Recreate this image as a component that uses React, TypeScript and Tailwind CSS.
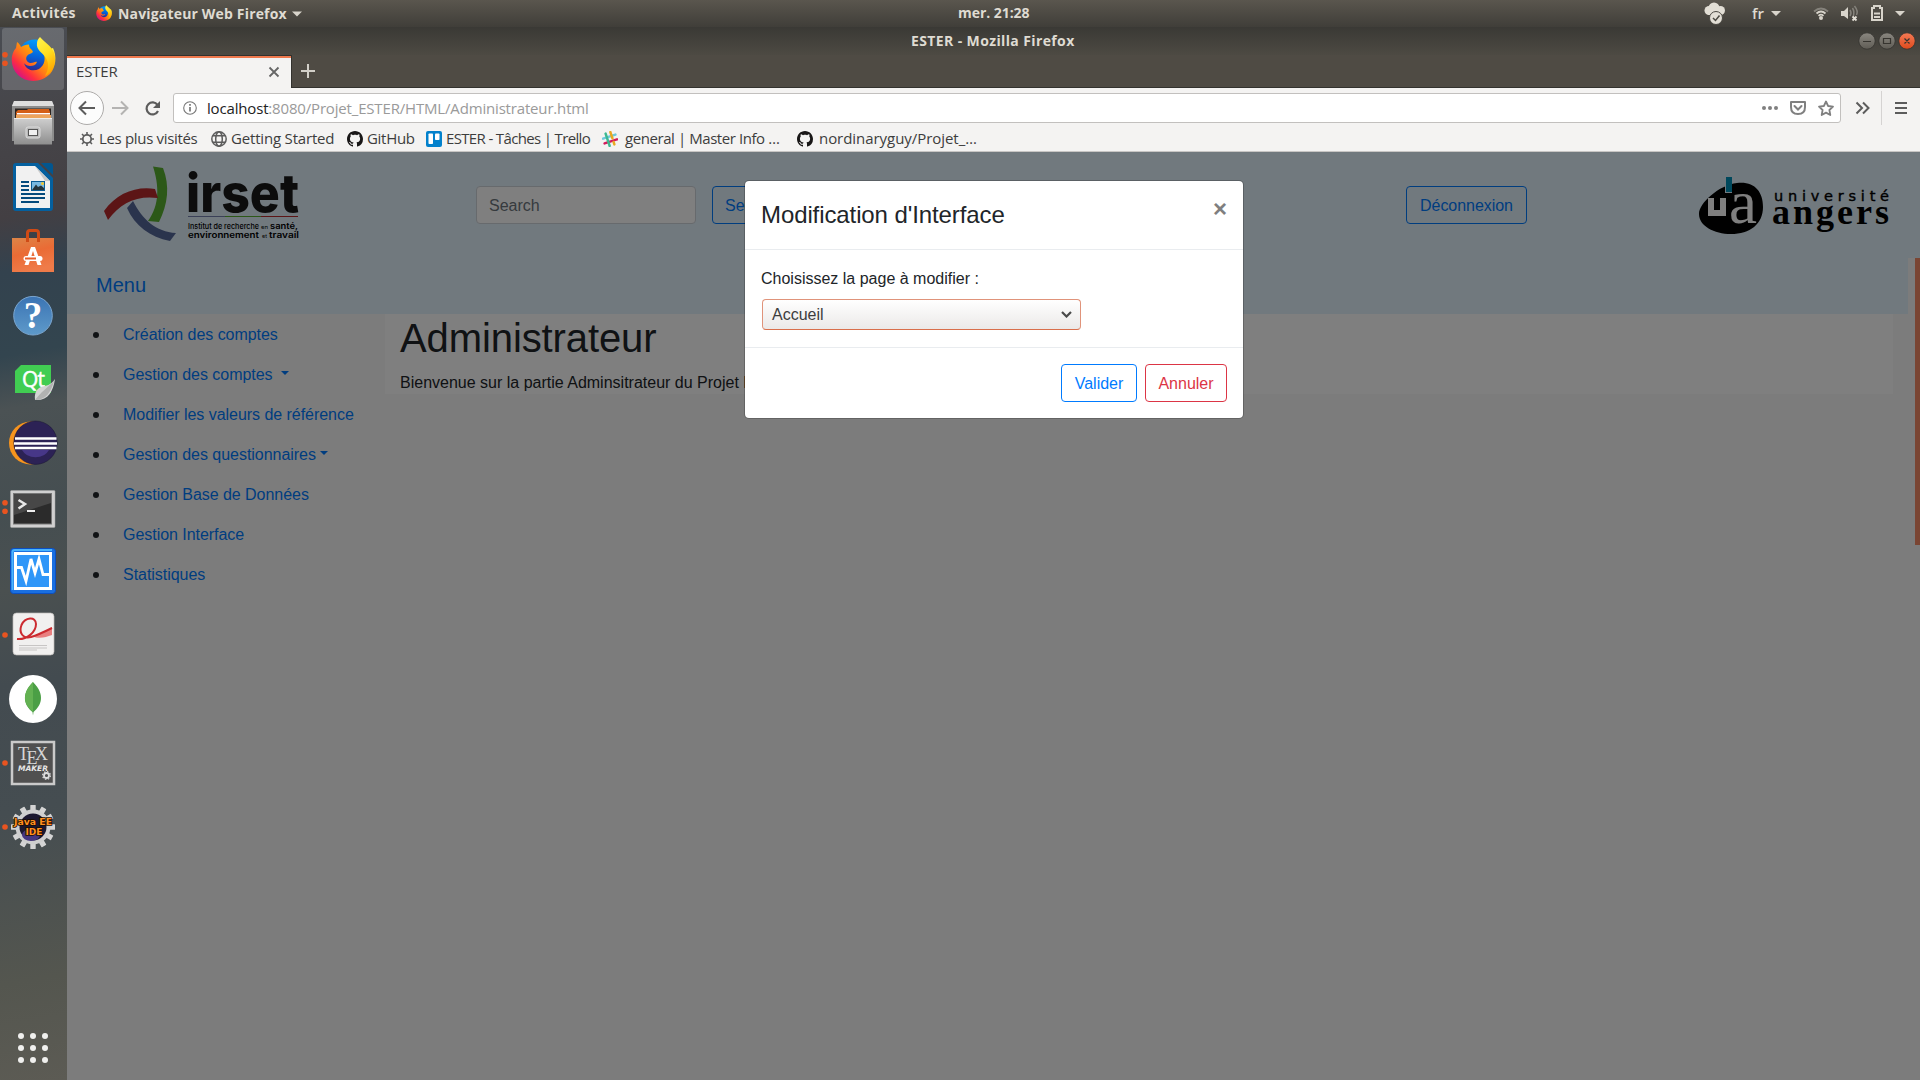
import type { ReactNode } from "react";

const ui = "font-['Open_Sans','Noto_Sans',sans-serif]";

function FirefoxArt() {
  return (
    <>
      <defs>
        <linearGradient id="fxBody" x1="0.9" y1="0.1" x2="0.1" y2="0.85">
          <stop offset="0" stopColor="#fff44f" />
          <stop offset="0.3" stopColor="#ffb000" />
          <stop offset="0.55" stopColor="#ff7a18" />
          <stop offset="0.78" stopColor="#ff2f3f" />
          <stop offset="1" stopColor="#d1108a" />
        </linearGradient>
        <linearGradient id="fxGlobe" x1="0.6" y1="0" x2="0.4" y2="1">
          <stop offset="0" stopColor="#00a0ff" />
          <stop offset="0.5" stopColor="#0562d8" />
          <stop offset="1" stopColor="#38197e" />
        </linearGradient>
        <linearGradient id="fxTail" x1="0.2" y1="0" x2="0.6" y2="1">
          <stop offset="0" stopColor="#fff24a" />
          <stop offset="0.5" stopColor="#ffde1f" />
          <stop offset="1" stopColor="#ffa300" />
        </linearGradient>
      </defs>
      <circle cx="24" cy="21" r="17.5" fill="url(#fxGlobe)" />
      <path
        d="M6 6 C8 7 9 9 10 11 C12 9.500 15 8.500 18 8.500 C18 11 19 12.500 21 14 L22 16 C20 18 17 18 16 20 C14 23 16 26 19 27 C22 27.500 24 25 26 26 C25 29 22 30 19 30 C15 30 13 27 13 27 C15 34 22 36 28 33 C34 29 35 22 32 16 L42 12 C46 20 45 31 39 38 C30 47 15 47 7 39 C-1 31 -1 18 5 12 Z"
        fill="url(#fxBody)"
      />
      <path
        d="M29 1 C33 6 40 9 43 17 C46 27 41 37 34 40 C38 33 38 27 35 22 C31 16 25 14 26 7 C26 4 28 2 29 1 Z"
        fill="url(#fxTail)"
      />
    </>
  );
}

function Slot({ children, dots = 0, active = false }: { children: ReactNode; dots?: number; active?: boolean }) {
  return (
    <svg width="67" height="64" viewBox="0 0 67 64" className="block shrink-0">
      {active && <rect x="2" y="1" width="62" height="62" rx="3" fill="#ffffff" fillOpacity="0.17" />}
      {dots === 1 && <circle cx="5" cy="32" r="2.800" fill="#e95420" />}
      {dots === 2 && (
        <>
          <circle cx="5" cy="27.700" r="2.800" fill="#e95420" />
          <circle cx="5" cy="36.200" r="2.800" fill="#e95420" />
        </>
      )}
      {children}
    </svg>
  );
}

function Dock() {
  const teeth = Array.from({ length: 12 }, (_, i) => i * 30);
  return (
    <aside className="flex w-[67px] shrink-0 flex-col bg-[linear-gradient(170deg,#4a4d53_0%,#464549_9%,#433f43_18%,#33424e_23%,#33454f_31%,#4b5254_36%,#454e51_46%,#4a5050_53%,#434b50_62%,#454d51_74%,#54564f_90%,#5c5b54_100%)]">
      <Slot dots={2} active>
        <g transform="translate(11 9)">
          <FirefoxArt />
        </g>
      </Slot>
      <Slot>
        <defs>
          <linearGradient id="steel" x1="0" y1="0" x2="0" y2="1">
            <stop offset="0" stopColor="#cfcfcf" />
            <stop offset="1" stopColor="#8e8e8e" />
          </linearGradient>
        </defs>
        <path d="M14 10H52L54 15V50H12V15Z" fill="#8d8d8d" />
        <path d="M14 10H52L54 15H12Z" fill="#dedede" />
        <rect x="15" y="17.500" width="36" height="12" fill="#2b2421" />
        <path d="M16 21L18 19H27L28 18H49L50 21V28H16Z" fill="#d45f18" />
        <rect x="17" y="22" width="33" height="1.500" fill="#fff" />
        <rect x="16" y="24" width="35" height="4" fill="#eda45c" />
        <rect x="14" y="27" width="38" height="26.500" rx="0.500" fill="url(#steel)" />
        <path d="M14 27.500H52" stroke="#eee" />
        <rect x="26" y="36" width="14" height="11" rx="2" fill="#b9b9b9" stroke="#dcdcdc" />
        <rect x="28.500" y="38.500" width="9" height="6" fill="#efefef" stroke="#555" />
      </Slot>
      <Slot>
        <path d="M16 8H38L53 23V53Q53 56 50 56H16Q13 56 13 53V11Q13 8 16 8Z" fill="#04609f" />
        <path d="M41 8H50Q53 8 53 11V20Z" fill="#02568f" />
        <path d="M16 11H35L50 26V53H16Z" fill="#f1f1f1" />
        <path d="M35 11L50 26H45Z" fill="#c9c9c9" />
        <path d="M21 27H29M21 31H29M21 35H29M21 39H45M21 43H45M21 47H39" stroke="#044a7c" strokeWidth="1.800" />
        <rect x="31" y="26" width="14" height="10" fill="#0b5c94" />
        <rect x="32" y="27" width="12" height="8" fill="#7ab9e0" />
        <path d="M32 35L36 29.500L38 32L41 30.500L44 33V35Z" fill="#26343a" />
        <circle cx="42.500" cy="28.500" r="1.500" fill="#f2c730" />
      </Slot>
      <Slot>
        <defs>
          <linearGradient id="bag" x1="0" y1="0" x2="0.3" y2="1">
            <stop offset="0" stopColor="#dd8547" />
            <stop offset="0.5" stopColor="#ea6b35" />
            <stop offset="1" stopColor="#ef7b49" />
          </linearGradient>
        </defs>
        <rect x="12" y="19" width="42" height="34" fill="url(#bag)" />
        <path d="M27.500 23V14Q27.500 11.500 30 11.500H36Q38.500 11.500 38.500 14V23" fill="none" stroke="#cf4a15" strokeWidth="3" />
        <path d="M24.500 46L31 28H35L41.500 46H37.500L33 32L28.500 46Z" fill="#fff" />
        <rect x="23.500" y="37" width="19" height="5" rx="2.500" fill="#fff" />
        <rect x="25" y="38.500" width="11" height="2" fill="#e8602c" />
      </Slot>
      <Slot>
        <defs>
          <linearGradient id="help" x1="0" y1="0" x2="0" y2="1">
            <stop offset="0" stopColor="#3b74b4" />
            <stop offset="1" stopColor="#5e9aca" />
          </linearGradient>
        </defs>
        <circle cx="33" cy="32.700" r="19.300" fill="url(#help)" stroke="#7ba6cf" strokeWidth="1" />
        <text x="33" y="45" textAnchor="middle" fontSize="37" fontFamily="Liberation Serif" fontWeight="bold" fill="#fff">
          ?
        </text>
      </Slot>
      <Slot>
        <path d="M21 18H51V46H15V24Z" fill="#41cd52" />
        <text x="22" y="40" fontSize="21" textLength="23" fontFamily="Open Sans" fill="#fff" stroke="#fff" strokeWidth="0.500">
          Qt
        </text>
        <path d="M55 32C53 45 48 54 35 53C34 44 38 40 45 39C50 38 53 35 55 32Z" fill="#d4d4d4" />
        <path d="M35 53C41 45 47 41 54 34C51 45 46 53 35 53Z" fill="#b2b2b2" />
      </Slot>
      <Slot>
        <circle cx="30.500" cy="32" r="21.500" fill="#f7941e" />
        <circle cx="35.500" cy="31.700" r="21.700" fill="#2c2255" stroke="#191432" strokeWidth="0.500" />
        <path d="M22 39H49A15 13 0 0 1 22 39Z" fill="#473788" />
        <path d="M15 27.500H56.500M14 32.500H57M15 37H56.500" stroke="#fff" strokeWidth="2.300" />
      </Slot>
      <Slot dots={2}>
        <rect x="10.500" y="15.500" width="44.500" height="37" rx="1" fill="#d0d0d0" stroke="#a5a5a5" strokeWidth="0.500" />
        <rect x="13.500" y="18.500" width="38" height="30.500" fill="#2b2b2b" stroke="#777" />
        <path d="M14 19H51V28L14 40Z" fill="#474747" />
        <path d="M18.500 25L25 29L18.500 33.500" fill="none" stroke="#e8e8e8" strokeWidth="2.500" />
        <path d="M27 36H35" stroke="#eee" strokeWidth="2" />
      </Slot>
      <Slot>
        <rect x="10.500" y="9.500" width="45" height="45" rx="3" fill="#1a6fe0" stroke="#0d4fc0" />
        <path d="M12.500 51V13Q12.500 11 15 11H52" fill="none" stroke="#49b4ff" strokeWidth="2" />
        <rect x="15.500" y="14.500" width="35" height="35" fill="#2f96f8" stroke="#fff" strokeWidth="3" />
        <path d="M16 28.500H21.500L26 42L31 20L35 34L39 20L43 35.500H50" fill="none" stroke="#fff" strokeWidth="2.800" />
      </Slot>
      <Slot dots={1}>
        <rect x="13" y="10" width="41" height="42" rx="3.500" fill="#f1f0ef" stroke="#bdbab8" strokeWidth="0.700" />
        <path d="M34 34C41 29 47 28 52 24V32C46 34 41 36 34 34Z" fill="#e98080" />
        <path d="M17 36C27 37 36 29 36 21C36 13 25 14 21.500 22C18.500 30 23 36 31 34C38 32 44 29 52 25" fill="none" stroke="#cc2b30" strokeWidth="2" />
        <path d="M19 42.500H47M19 45H47M19 47H37" stroke="#c7c5c4" strokeWidth="1" />
      </Slot>
      <Slot>
        <circle cx="33" cy="32" r="24" fill="#fff" />
        <path d="M33 15C46 28 41 39 33.500 45L33 48.500L32.500 45C25 39 20 28 33 15Z" fill="#4b9f45" />
        <path d="M33 15V45C25 39 20 28 33 15Z" fill="#63b152" />
      </Slot>
      <Slot dots={1}>
        <rect x="12" y="11" width="42" height="42" fill="#505050" stroke="#cacaca" strokeWidth="2.500" />
        <g fill="#d6d6d6" fontFamily="Liberation Serif" fontSize="18">
          <text x="18" y="29" textLength="10">T</text>
          <text x="26.500" y="33" textLength="10">E</text>
          <text x="35" y="29" textLength="12">X</text>
        </g>
        <text x="18" y="40" fontFamily="DejaVu Sans" fontWeight="bold" fontStyle="italic" fontSize="7.500" textLength="30" lengthAdjust="spacingAndGlyphs" fill="#e5e5e5">
          MAKER
        </text>
        <circle cx="46.500" cy="44.500" r="2.500" fill="none" stroke="#ddd" strokeWidth="1.800" />
        <circle cx="46.500" cy="44.500" r="3.900" fill="none" stroke="#ddd" strokeWidth="1.200" strokeDasharray="1.500 1.560" />
      </Slot>
      <Slot dots={1}>
        <g fill="#d4d4d4">
          {teeth.map((a) => (
            <rect key={a} x="30.300" y="10" width="5.400" height="8" rx="0.500" transform={`rotate(${a} 33 32)`} />
          ))}
        </g>
        <circle cx="33" cy="32" r="15.500" fill="#1c1830" stroke="#cfcfcf" strokeWidth="4" />
        <ellipse cx="31" cy="40" rx="9" ry="6" fill="#453680" />
        <g fontFamily="DejaVu Sans" fontSize="9" fontWeight="bold" fill="#ff8f1f" stroke="#1a0d00" strokeWidth="1.600" paintOrder="stroke">
          <text x="14" y="30" textLength="38" lengthAdjust="spacingAndGlyphs">Java EE</text>
          <text x="25.500" y="40" textLength="17" lengthAdjust="spacingAndGlyphs">IDE</text>
        </g>
      </Slot>
      <div className="mt-auto mb-[17px] ml-[18px] grid w-[30px] grid-cols-3 gap-[6px]">
        {Array.from({ length: 9 }, (_, i) => (
          <span key={i} className="size-[6px] rounded-full bg-[#f0f0ee]" />
        ))}
      </div>
    </aside>
  );
}

function TopBar() {
  return (
    <header className={`${ui} relative flex h-[27px] items-center bg-linear-to-b from-[#5a564e] to-[#403e39] text-[14px] font-bold text-[#dfdbd2]`}>
      <span className="mb-[2px] ml-3 w-[84px] tracking-[0.35px]">Activités</span>
      <svg width="16" height="16" viewBox="0 0 45 45" className="mb-px">
        <FirefoxArt />
      </svg>
      <span className="mb-px ml-[6px] w-[174px] whitespace-nowrap tracking-[0.17px]">Navigateur Web Firefox</span>
      <svg width="10" height="6" viewBox="0 0 10 6">
        <path d="M0 0.500H10L5 5.500Z" fill="#d8d4cb" />
      </svg>
      <span className="absolute top-[2px] left-[958px] whitespace-nowrap tracking-[-0.05px]">mer. 21:28</span>
      <svg className="ml-auto" width="216" height="27" viewBox="1704 0 216 27">
        <g fill="#e2ded5">
          <circle cx="1714" cy="8" r="5.500" />
          <circle cx="1709" cy="10.500" r="4.500" />
          <circle cx="1720.500" cy="10.500" r="4.500" />
          <rect x="1708" y="9" width="13" height="6" />
          <circle cx="1716" cy="18" r="6.500" stroke="#4a4842" strokeWidth="1" />
        </g>
        <path d="M1713 18L1715.500 20.500L1719.500 15.500" fill="none" stroke="#4a4842" strokeWidth="1.500" />
        <text x="1752" y="19" fontSize="15" fontFamily="Open Sans" fontWeight="600" fill="#dfdbd2" textLength="12">
          fr
        </text>
        <path d="M1771 11H1781L1776 16Z M1895 11H1905L1900 16Z" fill="#d8d4cb" />
        <g fill="none" stroke="#d8d4cb" strokeWidth="1.800">
          <path d="M1814 11.500Q1821 5.500 1828 11.500" stroke="#85827b" />
          <path d="M1816.500 13.500Q1821 9.500 1825.500 13.500" />
          <path d="M1818.500 15.800Q1821 13.500 1823.500 15.800" />
        </g>
        <circle cx="1821" cy="18" r="2" fill="#d8d4cb" />
        <path d="M1841 11H1844L1848 7V19L1844 16H1841Z" fill="#d8d4cb" />
        <path d="M1850 10Q1852 13 1850 16M1852.500 8Q1855 12 1853 17M1854.500 6Q1858.500 11 1856.500 15" fill="none" stroke="#85827b" strokeWidth="1.500" />
        <path d="M1852.500 16.500L1856.500 20.500M1856.500 16.500L1852.500 20.500" stroke="#e2ded5" strokeWidth="1.800" />
        <path d="M1874 6H1880V8H1882V20H1872V8H1874Z" fill="none" stroke="#d8d4cb" strokeWidth="2" />
        <path d="M1874 13.500H1880M1874 17H1880" stroke="#d8d4cb" strokeWidth="1.800" />
      </svg>
    </header>
  );
}

function GitHubMark() {
  return (
    <svg width="16" height="16" viewBox="0 0 16 16" fill="#191717">
      <path d="M8 0C3.580 0 0 3.580 0 8c0 3.540 2.290 6.530 5.470 7.590.4.070.55-.17.55-.38 0-.19-.01-.82-.01-1.490-2.010.37-2.530-.49-2.690-.94-.09-.23-.48-.94-.82-1.130-.28-.15-.68-.52-.01-.53.63-.01 1.080.58 1.230.82.72 1.210 1.870.87 2.330.66.07-.52.28-.87.51-1.070-1.780-.2-3.640-.89-3.640-3.950 0-.87.31-1.590.82-2.150-.08-.2-.36-1.020.08-2.120 0 0 .67-.21 2.200.82.64-.18 1.320-.27 2-.27s1.360.09 2 .27c1.530-1.040 2.200-.82 2.200-.82.44 1.100.16 1.920.08 2.120.51.56.82 1.270.82 2.150 0 3.070-1.870 3.750-3.650 3.950.29.25.54.73.54 1.480 0 1.070-.01 1.930-.01 2.200 0 .21.15.46.55.38A8.010 8.010 0 0 0 16 8c0-4.420-3.580-8-8-8z" />
    </svg>
  );
}

function BrowserChrome() {
  return (
    <div className={`${ui} shrink-0 text-[15px] text-[#3d3d3d]`}>
      <div className="relative flex h-7 items-center justify-end bg-linear-to-b from-[#3a3935] to-[#4d4a43]">
        <span className="absolute top-[3px] left-[844px] text-[14px] font-bold whitespace-nowrap tracking-[0.38px] text-[#dfdbd2]">ESTER - Mozilla Firefox</span>
        <svg width="64" height="28" viewBox="1856 27 64 28">
          <defs>
            <linearGradient id="btnGray" x1="0" y1="0" x2="0" y2="1">
              <stop offset="0" stopColor="#8a8780" />
              <stop offset="1" stopColor="#5f5c55" />
            </linearGradient>
            <linearGradient id="btnRed" x1="0" y1="0" x2="0" y2="1">
              <stop offset="0" stopColor="#f47a55" />
              <stop offset="1" stopColor="#de4a1c" />
            </linearGradient>
          </defs>
          <g stroke="#33322e" strokeWidth="0.800">
            <circle cx="1867" cy="41" r="8.200" fill="url(#btnGray)" />
            <circle cx="1887" cy="41" r="8.200" fill="url(#btnGray)" />
            <circle cx="1907" cy="41" r="8.200" fill="url(#btnRed)" />
          </g>
          <path d="M1863 41.500H1871M1883.500 38.500H1890.500V43.500H1883.500ZM1904.500 38.500L1909.500 43.500M1909.500 38.500L1904.500 43.500" stroke="#36342f" fill="none" strokeWidth="1.200" />
        </svg>
      </div>
      <div className="flex h-[33px] items-stretch border-b border-[#33322e] bg-[#4f4b44]">
        <div className="-mb-px flex w-[225px] items-center border-t border-r border-[#33322e] bg-[#f4f3f2]">
          <div className="flex h-full w-full items-center justify-between border-t-2 border-[#f0794d] pr-[11px] pb-[3px] pl-[9px]">
            <span className="tracking-[-0.15px]">ESTER</span>
            <svg width="12" height="12" viewBox="0 0 12 12">
              <path d="M1.500 1.500L10.500 10.500M10.500 1.500L1.500 10.500" stroke="#666" strokeWidth="1.800" />
            </svg>
          </div>
        </div>
        <svg width="14" height="14" viewBox="0 0 14 14" className="mt-[9px] ml-[9px]">
          <path d="M7 0V14M0 7H14" stroke="#d2cfc8" strokeWidth="2" />
        </svg>
      </div>
      <div className="flex h-10 items-center bg-[#f4f3f2]">
        <svg width="106" height="40" viewBox="67 88 106 40" fill="none">
          <circle cx="87" cy="108" r="16.500" fill="#fcfcfc" stroke="#adabaa" />
          <path d="M95 108H80M86 101.500L79.500 108L86 114.500" stroke="#5c5c5c" strokeWidth="2" />
          <path d="M112 108H127M121 101.500L127.500 108L121 114.500" stroke="#b4b3b2" strokeWidth="2" />
          <path d="M157.500 105A6 6 0 1 0 158 111" stroke="#5c5c5c" strokeWidth="2.200" />
          <path d="M160 101V108H153Z" fill="#5c5c5c" />
        </svg>
        <div className="flex h-[30px] w-[1668px] items-center rounded-[3px] border border-[#c2c0be] bg-white pr-1 pl-[9px] whitespace-nowrap">
          <svg width="14" height="14" viewBox="0 0 14 14">
            <circle cx="7" cy="7" r="6.300" fill="none" stroke="#777" strokeWidth="1.100" />
            <path d="M7 6V10.500M7 3V4.800" stroke="#777" strokeWidth="1.700" />
          </svg>
          <span className="ml-[10px] tracking-[-0.17px] text-[#9a9a9a]">
            <span className="text-[#222]">localhost</span>:8080/Projet_ESTER/HTML/Administrateur.html
          </span>
          <svg width="76" height="28" viewBox="1760 94 76 28" className="ml-auto" fill="none" stroke="#808080">
            <g fill="#808080" stroke="none">
              <circle cx="1764" cy="108" r="2" />
              <circle cx="1770" cy="108" r="2" />
              <circle cx="1776" cy="108" r="2" />
            </g>
            <path d="M1791 102H1805V107Q1805 114 1798 114Q1791 114 1791 107Z" strokeWidth="2" strokeLinejoin="round" />
            <path d="M1794.500 106L1798 109.500L1801.500 106" strokeWidth="2" strokeLinecap="round" />
            <path d="M1826 101.500L1828.100 106L1833 106.600L1829.400 110L1830.300 115L1826 112.600L1821.700 115L1822.600 110L1819 106.600L1823.900 106Z" strokeWidth="1.800" strokeLinejoin="round" />
          </svg>
        </div>
        <svg width="79" height="40" viewBox="1841 88 79 40">
          <path d="M1856.500 102.500L1862 108L1856.500 113.500M1863 102.500L1868.500 108L1863 113.500" fill="none" stroke="#5c5c5c" strokeWidth="2" />
          <path d="M1881.500 91V125" stroke="#d5d3d2" />
          <path d="M1895 103H1907M1895 108H1907M1895 113H1907" stroke="#5c5c5c" strokeWidth="2" />
        </svg>
      </div>
      <div className="flex h-6 items-center border-b border-[#c8c6c4] bg-[#f4f3f2] pb-[2px] pl-[13px] whitespace-nowrap">
        <svg width="14" height="14" viewBox="0 0 14 14" fill="none" stroke="#5c5c5c">
          <circle cx="7" cy="7" r="4.200" strokeWidth="1.800" />
          <path d="M7 0V3M7 11V14M0 7H3M11 7H14M2 2L4.200 4.200M9.800 9.800L12 12M12 2L9.800 4.200M4.200 9.800L2 12" strokeWidth="1.600" />
        </svg>
        <span className="ml-[5px] w-[112px] tracking-[-0.33px]">Les plus visités</span>
        <svg width="16" height="16" viewBox="0 0 16 16" fill="none" stroke="#5c5c5c" strokeWidth="1.500">
          <circle cx="8" cy="8" r="7.200" />
          <ellipse cx="8" cy="8" rx="3.300" ry="7.200" />
          <path d="M2 4.700H14M2 11.300H14" />
        </svg>
        <span className="ml-1 w-[116px] tracking-[-0.18px]">Getting Started</span>
        <GitHubMark />
        <span className="ml-1 w-[59px] tracking-[-0.3px]">GitHub</span>
        <svg width="16" height="16" viewBox="0 0 16 16">
          <rect width="16" height="16" rx="2" fill="#0281cc" />
          <rect x="2.500" y="2.500" width="4.500" height="10.500" rx="0.800" fill="#fff" />
          <rect x="9" y="2.500" width="4.500" height="6.500" rx="0.800" fill="#fff" />
        </svg>
        <span className="ml-1 w-[156px] tracking-[-0.65px]">ESTER - Tâches | Trello</span>
        <svg width="16" height="16" viewBox="0 0 16 16" fill="none" strokeWidth="2.500" strokeLinecap="round">
          <g transform="rotate(-18 8 8)">
            <path d="M1.500 5.500H14.500" stroke="#6ecadc" />
            <path d="M1.500 10.500H14.500" stroke="#d31c5b" />
            <path d="M5.500 1.500V14.500" stroke="#3eb991" />
            <path d="M10.500 1.500V8" stroke="#e9a820" />
            <path d="M10.500 12V14.500" stroke="#e9a820" />
          </g>
        </svg>
        <span className="ml-[7px] w-[172px] tracking-[-0.43px]">general | Master Info …</span>
        <GitHubMark />
        <span className="ml-[6px] tracking-[-0.05px]">nordinaryguy/Projet_…</span>
      </div>
    </div>
  );
}

function IrsetLogo() {
  return (
    <svg width="200" height="84" viewBox="100 162 200 84" className="block overflow-visible">
      <path d="M153 166.500L163 168C170 186 168 204 159 222L148 221C160 205 159 185 153 166.500Z" fill="#58b030" />
      <path d="M104 211C117 193 136 186 155 189L158 198C137 195 120 203 108 220Z" fill="#b82a2c" />
      <path d="M127 208L133 201C142 219 156 232 176 233L170 241C150 237 135 226 127 208Z" fill="#55689a" />
      <text x="186" y="212" fontSize="53" fontFamily="Inter" fontWeight="800" textLength="113" lengthAdjust="spacingAndGlyphs" fill="#181818">
        irset
      </text>
      <path d="M188 216.500H225" stroke="#7481ae" />
      <path d="M225 216.500H261" stroke="#58b030" />
      <path d="M261 216.500H298" stroke="#b82a2c" />
      <g fontFamily="Inter" fill="#000">
        <text x="188" y="228.500" fontSize="7.500" fontWeight="500" textLength="71" lengthAdjust="spacingAndGlyphs">Institut de recherche</text>
        <text x="261" y="228.500" fontSize="5" textLength="7" lengthAdjust="spacingAndGlyphs">en</text>
        <text x="270" y="228.500" fontSize="8.500" fontWeight="600" textLength="28" lengthAdjust="spacingAndGlyphs">santé,</text>
        <text x="188" y="238" fontSize="8.500" fontWeight="600" textLength="71" lengthAdjust="spacingAndGlyphs">environnement</text>
        <text x="262" y="238" fontSize="5" textLength="5" lengthAdjust="spacingAndGlyphs">et</text>
        <text x="269" y="238" fontSize="8.500" fontWeight="600" textLength="30" lengthAdjust="spacingAndGlyphs">travail</text>
      </g>
    </svg>
  );
}

function AngersLogo() {
  return (
    <svg width="192" height="60" viewBox="1698 176 192 60" className="block">
      <path d="M1699 214C1699 203 1719 185 1737 183C1754 181 1763 191 1763 207C1763 224 1750 234 1731 234C1714 234 1699 226 1699 214Z" fill="#000" />
      <path d="M1708 198H1714V210H1720V198H1726V216H1708Z" fill="#fff" />
      <text x="1729" y="223" fontSize="62" fontFamily="Liberation Serif" textLength="28" lengthAdjust="spacingAndGlyphs" fill="#fff">
        a
      </text>
      <rect x="1725" y="177" width="7" height="16" fill="#e3f2fd" />
      <rect x="1726" y="177" width="6" height="15" fill="#0090b8" />
      <text x="1774" y="201" fontSize="14.500" fontFamily="DejaVu Sans" textLength="115" fill="#000" stroke="#000" strokeWidth="0.400">
        université
      </text>
      <text x="1772" y="223.500" fontSize="36" fontFamily="Liberation Serif" fontWeight="bold" textLength="117" fill="#000">
        angers
      </text>
    </svg>
  );
}

const links: { label: string; caret?: string }[] = [
  { label: "Création des comptes" },
  { label: "Gestion des comptes", caret: "ml-2" },
  { label: "Modifier les valeurs de référence" },
  { label: "Gestion des questionnaires", caret: "ml-1" },
  { label: "Gestion Base de Données" },
  { label: "Gestion Interface" },
  { label: "Statistiques" },
];

function Page() {
  return (
    <div className="relative grow bg-[#f8f8f8] font-['Liberation_Sans',Arial,sans-serif] text-base text-[#212529]">
      <div className="flex h-[106px] bg-[#e3f2fd]">
        <div className="mt-[10px] ml-[33px] w-[376px]">
          <IrsetLogo />
        </div>
        <div className="mt-[34px] flex w-[930px] gap-4">
          <div className="flex h-[38px] w-[220px] items-center rounded border border-[#ced4da] bg-white px-3 pt-px text-[#6c757d]">Search</div>
          <div className="flex h-[38px] items-center rounded border border-[#007bff] px-3 pt-px text-[#007bff]">Search</div>
        </div>
        <div className="mt-[34px] flex h-[38px] w-[121px] items-center justify-center rounded border border-[#007bff] pt-px tracking-[-0.05px] text-[#007bff]">Déconnexion</div>
        <div className="mt-6 mr-[30px] ml-auto">
          <AngersLogo />
        </div>
      </div>
      <div className="mr-3 h-14 bg-[#e3f2fd] pt-3 pl-[29px] text-[20px] leading-[30px] text-[#007bff]">Menu</div>
      <div className="flex">
        <ul className="w-[318px] pt-px">
          {links.map((l) => (
            <li key={l.label} className="flex h-10 items-center pl-[26px] whitespace-nowrap tracking-[-0.04px] text-[#007bff]">
              <span className="mr-[24px] size-[6px] rounded-full bg-[#212529]" />
              {l.label}
              {l.caret && <span className={`${l.caret} mb-1 border-x-[4.800px] border-t-[4.800px] border-x-transparent border-t-[#007bff]`} />}
            </li>
          ))}
        </ul>
        <div className="h-20 w-[1508px] bg-white pl-[15px]">
          <h1 className="mb-[9px] text-[40px] leading-[48px] tracking-[-0.1px]">Administrateur</h1>
          <p className="leading-6">Bienvenue sur la partie Adminsitrateur du Projet ESTER</p>
        </div>
      </div>
      <div className="absolute top-[106px] right-0 h-[287px] w-[5px] bg-[#f58b66]" />
      <div className="absolute inset-0 bg-black/50">
        <div className="mt-7 ml-[677px] w-[500px] rounded-[5px] border border-black/20 bg-white bg-clip-padding">
          <div className="flex h-[69px] justify-between border-b border-[#e9ecef] p-4">
            <h5 className="text-[24px] leading-9 tracking-[-0.1px]">Modification d'Interface</h5>
            <span className="text-[24px] leading-6 font-bold text-[#7f7f7f]">×</span>
          </div>
          <div className="h-[97px] p-4">
            <p className="pt-px leading-6">Choisissez la page à modifier :</p>
            <div className="mt-2 ml-px flex h-[31px] w-[319px] items-center justify-between rounded border border-[#e0937a] border-b-[#d96f4c] bg-linear-to-b from-white to-[#ebe9e8] pr-2 pl-[9px] text-[#3d3d3d]">
              Accueil
              <svg width="11" height="7" viewBox="0 0 11 7">
                <path d="M1 1L5.500 5.500L10 1" fill="none" stroke="#4a4a4a" strokeWidth="2.200" />
              </svg>
            </div>
          </div>
          <div className="flex h-[71px] justify-end gap-2 border-t border-[#e9ecef] p-4">
            <div className="flex h-[38px] w-[76px] items-center justify-center rounded border border-[#007bff] pt-px text-[#007bff]">Valider</div>
            <div className="flex h-[38px] w-[82px] items-center justify-center rounded border border-[#dc3545] pt-px text-[#dc3545]">Annuler</div>
          </div>
        </div>
      </div>
    </div>
  );
}

export default function App() {
  return (
    <div className="flex h-[1080px] w-[1920px] flex-col overflow-hidden">
      <TopBar />
      <div className="flex grow">
        <Dock />
        <div className="flex grow flex-col">
          <BrowserChrome />
          <Page />
        </div>
      </div>
    </div>
  );
}
